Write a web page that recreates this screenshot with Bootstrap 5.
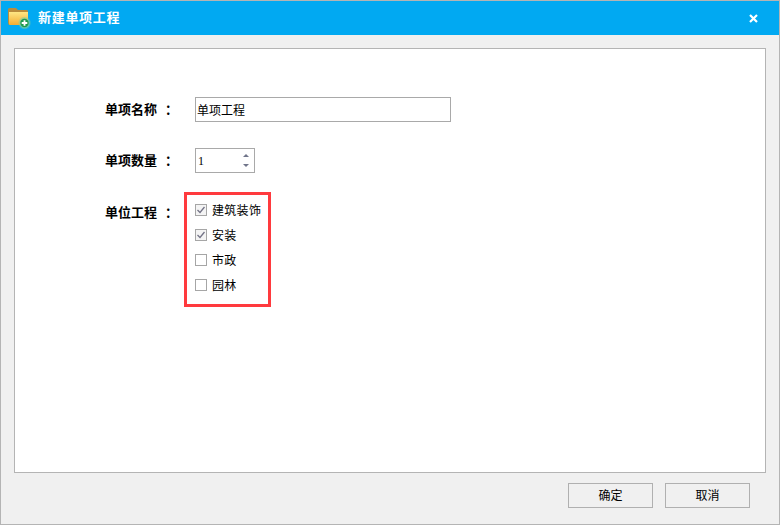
<!DOCTYPE html>
<html lang="zh">
<head>
<meta charset="utf-8">
<title>新建单项工程</title>
<link href="https://cdn.jsdelivr.net/npm/bootstrap@5.3.0/dist/css/bootstrap.min.css" rel="stylesheet">
<style>
html,body{margin:0;background:#f0f0f0;overflow:hidden}
body,button,input{font-family:"Liberation Sans","Noto Sans CJK SC",sans-serif;font-size:12px;color:#000}
.dlg{width:780px;height:525px;border:1px solid #b4b4b4;background:#f0f0f0}
.dlg-title{height:34px;background:#01a9f2;color:#fff;padding:0 21px 0 7px}
.dlg-title-text{font-size:13px;font-weight:700;letter-spacing:.7px;margin-left:6px}
.dlg-close{background:none;border:0;color:#fff;padding:0;width:9px}
.dlg-panel{margin:13px 13px 0;height:425px;background:#fff;border:1px solid #b4b4b4;padding:48px 0 0 90px}
.lbl{width:90px;font-size:13px;font-weight:700;flex:none}
.lbl-colon{display:inline-block;margin-left:8px}
.fld-row{height:25px}
.txt-box{width:256px;height:25px;border:1px solid #a9a9a9;border-radius:0;padding:0 1px;font-size:12px;color:#000;background:#fff;box-shadow:none}
.spin-box{width:60px;height:25px;border:1px solid #a9a9a9;padding:0 5px 0 2px;background:#fff}
.spin-val{font-family:"Liberation Serif",serif;font-size:12px}
.spin-arrows{gap:7px}
.spin-gap{margin-top:26px}
.unit-row{margin-top:19px}
.unit-lbl{padding-top:12px;line-height:18px}
.red-box{margin-left:-11px;width:87px;height:115px;border:3px solid #ff3a3e;padding:3px 0 0 8px}
.chk-row{height:25px;gap:5px;margin:0;padding:0}
.chk-row .form-check-input{float:none;width:12px;height:12px;margin:0 0 1px;border:1px solid #a6a6a6;border-radius:0;background-color:#fff;background-image:none;flex:none}
.chk-row .form-check-input:checked{background-color:#f4f4f4;border-color:#a6a6a6;background-image:url("data:image/svg+xml,%3Csvg xmlns='http://www.w3.org/2000/svg' viewBox='0 0 10 10'%3E%3Cpath d='M1.500 5 L4 7.500 L8.500 2' fill='none' stroke='%23737386' stroke-width='1.300'/%3E%3C/svg%3E");background-size:10px 10px}
.chk-text{font-size:12px;letter-spacing:.3px;color:#000;line-height:1}
.dlg-foot{margin:10px 29px 0 0;gap:12px}
.foot-btn{width:85px;height:25px;border:1px solid #b0b0b0;border-radius:0;background:#f0f0f0;color:#000;font-size:12px;padding:0;line-height:1}
</style>
</head>
<body>
<div class="dlg d-flex flex-column">
  <div class="dlg-title d-flex align-items-center">
    <svg width="24" height="24" viewBox="0 0 24 24">
      <defs>
        <linearGradient id="fg" x1="0" y1="0" x2="0" y2="1"><stop offset="0" stop-color="#fee784"/><stop offset="1" stop-color="#f3ac33"/></linearGradient>
        <radialGradient id="gl"><stop offset=".6" stop-color="#7fcf9c"/><stop offset="1" stop-color="#7fcf9c" stop-opacity=".1"/></radialGradient>
      </defs>
      <path d="M0 3.500 Q0 2 1.500 2 H8 L10 4 H19 Q20 4 20 5.500 V18 Q20 19 19 19 H2 Q0 19 0 17 Z" fill="#b98c3c"/>
      <path d="M1 6 H20 V18 Q20 19 19 19 H2 Q1 19 1 18 Z" fill="url(#fg)"/>
      <circle cx="16.500" cy="17" r="6.500" fill="url(#gl)"/>
      <circle cx="16.500" cy="17" r="4.200" fill="#1d9a50"/>
      <path d="M16.500 14.200 V19.800 M13.700 17 H19.300" stroke="#fff" stroke-width="1.800"/>
    </svg>
    <span class="dlg-title-text flex-grow-1">新建单项工程</span>
    <button type="button" class="dlg-close" aria-label="关闭">
      <svg width="9" height="9" viewBox="0 0 9 9" class="d-block"><path d="M1 1 L8 8 M8 1 L1 8" stroke="#fff" stroke-width="2.200"/></svg>
    </button>
  </div>

  <div class="dlg-panel">
    <div class="d-flex align-items-center fld-row">
      <label class="lbl" for="nm">单项名称<span class="lbl-colon">：</span></label>
      <input id="nm" class="form-control txt-box" value="单项工程">
    </div>
    <div class="d-flex align-items-center fld-row spin-gap">
      <span class="lbl">单项数量<span class="lbl-colon">：</span></span>
      <div class="spin-box d-flex align-items-center justify-content-between">
        <span class="spin-val">1</span>
        <span class="spin-arrows d-flex flex-column">
          <svg width="6" height="3" viewBox="0 0 6 3" class="d-block"><path d="M3 0 L6 3 H0 Z" fill="#70758a"/></svg>
          <svg width="6" height="3" viewBox="0 0 6 3" class="d-block"><path d="M0 0 H6 L3 3 Z" fill="#70758a"/></svg>
        </span>
      </div>
    </div>
    <div class="d-flex align-items-start unit-row">
      <span class="lbl unit-lbl">单位工程<span class="lbl-colon">：</span></span>
      <div class="red-box">
        <label class="form-check chk-row d-flex align-items-center"><input class="form-check-input" type="checkbox" checked><span class="chk-text">建筑装饰</span></label>
        <label class="form-check chk-row d-flex align-items-center"><input class="form-check-input" type="checkbox" checked><span class="chk-text">安装</span></label>
        <label class="form-check chk-row d-flex align-items-center"><input class="form-check-input" type="checkbox"><span class="chk-text">市政</span></label>
        <label class="form-check chk-row d-flex align-items-center"><input class="form-check-input" type="checkbox"><span class="chk-text">园林</span></label>
      </div>
    </div>
  </div>

  <div class="dlg-foot d-flex justify-content-end">
    <button type="button" class="btn foot-btn">确定</button>
    <button type="button" class="btn foot-btn">取消</button>
  </div>
</div>
<script src="https://cdn.jsdelivr.net/npm/bootstrap@5.3.0/dist/js/bootstrap.bundle.min.js"></script>
</body>
</html>
